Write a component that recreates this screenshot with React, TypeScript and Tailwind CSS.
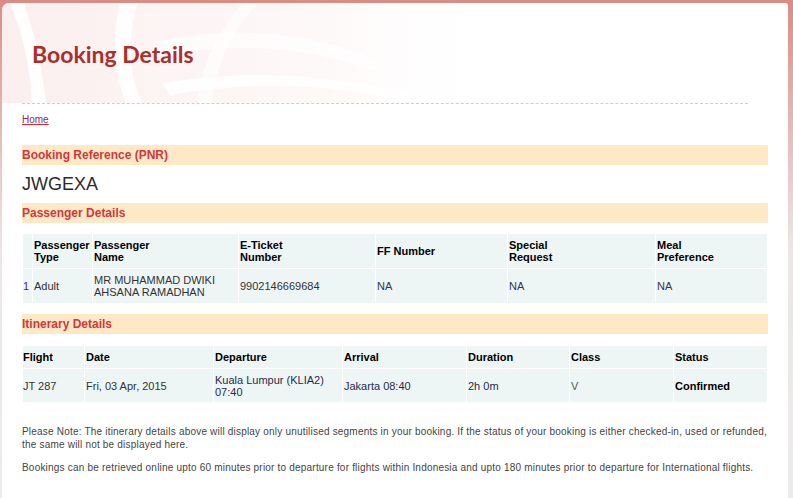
import React from 'react';

const passengers = [
  {
    idx: '1',
    type: 'Adult',
    name: ['MR MUHAMMAD DWIKI', 'AHSANA RAMADHAN'],
    ticket: '9902146669684',
    ff: 'NA',
    special: 'NA',
    meal: 'NA',
  },
];

const flights = [
  {
    flight: 'JT 287',
    date: 'Fri, 03 Apr, 2015',
    departure: ['Kuala Lumpur (KLIA2)', '07:40'],
    arrival: 'Jakarta 08:40',
    duration: '2h 0m',
    cls: 'V',
    status: 'Confirmed',
  },
];

function SectionBar({ title }: { title: string }) {
  return (
    <div className="bg-[#fde9c6] h-[20px] flex items-center text-[12px] font-bold text-[#d6363b] leading-none">
      {title}
    </div>
  );
}

// faint sunburst behind the page title
function HeaderArt() {
  return (
    <svg className="absolute inset-0 w-full h-full" viewBox="0 0 786 100" preserveAspectRatio="none">
      <defs>
        <linearGradient id="fade" x1="0" y1="0" x2="1" y2="0">
          <stop offset="0" stopColor="#fbeeee" stopOpacity="1" />
          <stop offset="0.4" stopColor="#fdf5f5" stopOpacity="0.7" />
          <stop offset="0.65" stopColor="#ffffff" stopOpacity="0" />
        </linearGradient>
      </defs>
      <rect x="0" y="0" width="786" height="100" fill="url(#fade)" />
      <path d="M8 0 C 20 30, 28 60, 30 100 L 44 100 C 40 60, 32 30, 22 0 Z" fill="#ffffff" opacity="0.9" />
      <path d="M118 0 C 110 30, 112 70, 124 100 L 140 100 C 126 70, 126 30, 136 0 Z" fill="#ffffff" opacity="0.85" />
      <path d="M150 40 C 230 20, 320 30, 380 60 L 372 68 C 310 44, 230 38, 156 54 Z" fill="#ffffff" opacity="0.6" />
      <path d="M160 80 C 250 66, 330 70, 420 95 L 414 100 C 330 80, 250 78, 168 92 Z" fill="#ffffff" opacity="0.8" />
      <path d="M240 0 C 215 30, 200 60, 196 100 L 210 100 C 214 62, 228 30, 256 0 Z" fill="#ffffff" opacity="0.6" />
    </svg>
  );
}

export default function App() {
  return (
    <div
      className="w-[793px] h-[498px] overflow-hidden bg-gradient-to-b from-[#d98c84] via-[#ede6e6] to-[#ebebeb] pt-[3px] pl-[2px] pr-[5px]"
      style={{ fontFamily: '"Liberation Sans", Arial, sans-serif' }}
    >
      <div className="bg-white h-full rounded-tl-[7px] rounded-tr-[3px] overflow-hidden">
        <div className="relative h-[100px]">
          <HeaderArt />
          <div className="relative pl-[30px] pt-[40px]">
            <h1
              className="text-[23px] font-bold text-[#a8312c] leading-none"
              style={{ fontFamily: 'Lato, "Open Sans", sans-serif' }}
            >
              Booking Details
            </h1>
          </div>
        </div>
        <div className="ml-[20px] mr-[40px] border-t border-dashed border-[#cfcfcf]" />

        <div className="px-[20px]">
          <div className="pt-[10px] h-[41px] text-[10px] leading-[12px]">
            <a href="#" className="text-[#8a2a6a] underline decoration-[#e0242b]">
              Home
            </a>
          </div>

          <SectionBar title="Booking Reference (PNR)" />
          <div className="h-[38px] flex items-center text-[18px] text-[#2b2b2b] leading-none">JWGEXA</div>

          <SectionBar title="Passenger Details" />
          <div className="pt-[10px] pb-[10px]">
            <table className="w-full table-fixed border-separate border-spacing-[1px] text-[11px] leading-[12px] text-left">
              <colgroup>
                <col className="w-[9px]" />
                <col className="w-[59px]" />
                <col className="w-[145px]" />
                <col className="w-[136px]" />
                <col className="w-[131px]" />
                <col className="w-[147px]" />
                <col />
              </colgroup>
              <thead>
                <tr className="h-[34px] bg-[#eef6f5] text-black">
                  <th className="px-px"></th>
                  <th className="px-px font-bold">Passenger<br />Type</th>
                  <th className="px-px font-bold">Passenger<br />Name</th>
                  <th className="px-px font-bold">E-Ticket<br />Number</th>
                  <th className="px-px font-bold">FF Number</th>
                  <th className="px-px font-bold">Special<br />Request</th>
                  <th className="px-px font-bold">Meal<br />Preference</th>
                </tr>
              </thead>
              <tbody>
                {passengers.map(p => (
                  <tr key={p.idx} className="h-[34px] bg-[#eef6f5] text-[#333]">
                    <td className="px-0 text-[#5b2356]">{p.idx}</td>
                    <td className="px-px">{p.type}</td>
                    <td className="px-px">{p.name[0]}<br />{p.name[1]}</td>
                    <td className="px-px">{p.ticket}</td>
                    <td className="px-px text-[#2e3553]">{p.ff}</td>
                    <td className="px-px text-[#2e3553]">{p.special}</td>
                    <td className="px-px text-[#2e3553]">{p.meal}</td>
                  </tr>
                ))}
              </tbody>
            </table>
          </div>

          <SectionBar title="Itinerary Details" />
          <div className="pt-[11px]">
            <table className="w-full table-fixed border-separate border-spacing-[1px] text-[11px] leading-[12px] text-left">
              <colgroup>
                <col className="w-[61px]" />
                <col className="w-[128px]" />
                <col className="w-[128px]" />
                <col className="w-[123px]" />
                <col className="w-[102px]" />
                <col className="w-[103px]" />
                <col />
              </colgroup>
              <thead>
                <tr className="h-[22px] bg-[#eef6f5] text-black">
                  <th className="px-0 font-bold">Flight</th>
                  <th className="px-px font-bold">Date</th>
                  <th className="px-px font-bold">Departure</th>
                  <th className="px-px font-bold">Arrival</th>
                  <th className="px-px font-bold">Duration</th>
                  <th className="px-px font-bold">Class</th>
                  <th className="px-px font-bold">Status</th>
                </tr>
              </thead>
              <tbody>
                {flights.map(f => (
                  <tr key={f.flight} className="h-[33px] bg-[#eef6f5] text-[#333]">
                    <td className="px-0">{f.flight}</td>
                    <td className="px-px">{f.date}</td>
                    <td className="px-px text-[#1f2b4d]">{f.departure[0]}<br />{f.departure[1]}</td>
                    <td className="px-px text-[#1f2b4d]">{f.arrival}</td>
                    <td className="px-px text-[#1f2b4d]">{f.duration}</td>
                    <td className="px-px text-[#555]">{f.cls}</td>
                    <td className="px-px font-bold text-black">{f.status}</td>
                  </tr>
                ))}
              </tbody>
            </table>
          </div>

          <div className="pt-[22px] text-[10px] leading-[13px] text-[#444] tracking-[0.2px]">
            <p>
              Please Note: The itinerary details above will display only unutilised segments in your booking. If the status of your booking is either checked-in, used or refunded, the same will not be displayed here.
            </p>
            <p className="mt-[10px]">
              Bookings can be retrieved online upto 60 minutes prior to departure for flights within Indonesia and upto 180 minutes prior to departure for International flights.
            </p>
          </div>
        </div>
      </div>
    </div>
  );
}
